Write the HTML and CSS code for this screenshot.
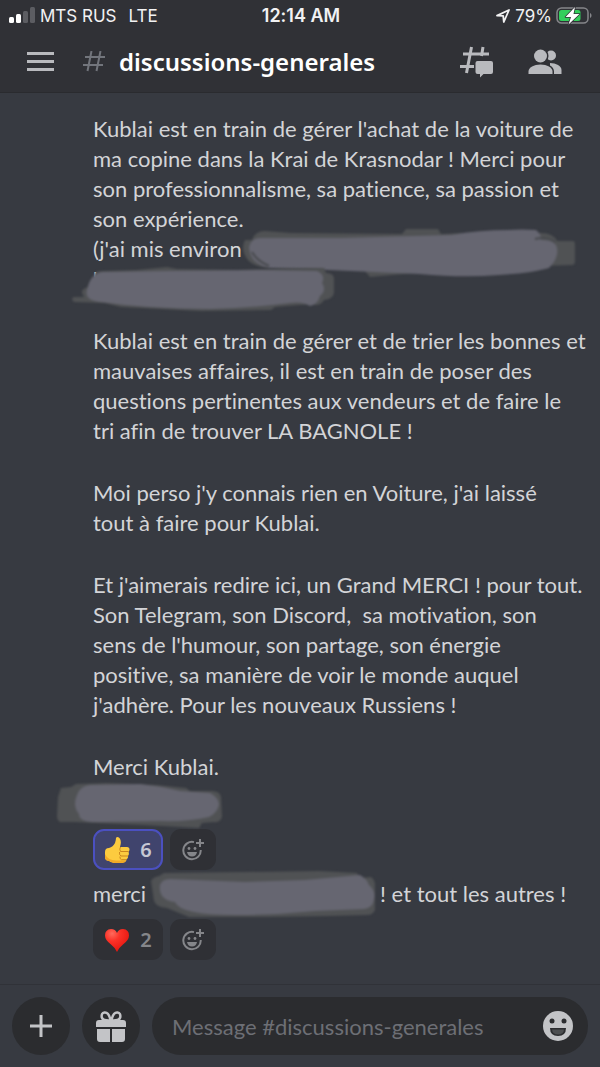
FILE: index.html
```html
<!DOCTYPE html>
<html lang="fr">
<head>
    <meta charset="UTF-8">
    <meta name="viewport" content="width=device-width, initial-scale=1.0">
    <title>discussions-generales</title>
    <link rel="stylesheet" href="styles.css">
</head>
<body>
    <header class="top">
        <div class="status">
            <div class="status-left">
                <svg class="signal" viewBox="0 0 26 17" aria-hidden="true">
                    <rect x="0" y="10" width="5" height="6" rx="1.5" fill="#fff"/>
                    <rect x="7" y="7" width="5" height="9" rx="1.5" fill="#fff"/>
                    <rect x="14" y="4" width="5" height="12" rx="1.5" fill="#5c5d62"/>
                    <rect x="21" y="0" width="5" height="16" rx="1.5" fill="#5c5d62"/>
                </svg>
                <span>MTS RUS</span>
                <span class="network">LTE</span>
            </div>
            <div class="clock">12:14 AM</div>
            <div class="status-right">
                <svg class="location" viewBox="0 0 16 16" aria-hidden="true">
                    <path d="M2 7.6 14 2 8.8 14 8.2 7.9Z" fill="none" stroke="#f2f2f3" stroke-width="1.8" stroke-linejoin="round"/>
                </svg>
                <span>79%</span>
                <svg class="battery" viewBox="0 0 37 18" aria-hidden="true">
                    <rect x="1" y="1" width="31" height="15" rx="4.5" fill="none" stroke="#85868a" stroke-width="1.5"/>
                    <rect x="3" y="3" width="21.5" height="11" rx="2.5" fill="#33cf5c"/>
                    <path d="M34 6c2 .7 2 4.300 0 5z" fill="#85868a"/>
                    <path d="M19 0 9.500 10h5.500L12.500 17.500 23.500 7h-6z" fill="#fff" stroke="#303136" stroke-width="1.5" stroke-linejoin="round" paint-order="stroke"/>
                </svg>
            </div>
        </div>
        <div class="channel">
            <button class="icon-btn" aria-label="Menu">
                <svg class="menu" viewBox="0 0 27 19"><path d="M0 1.500h27M0 9.500h27M0 17.500h27" stroke="#b9babe" stroke-width="3"/></svg>
            </button>
            <svg class="hash" viewBox="0 0 22 21" aria-hidden="true">
                <path d="M8.500 0 4.500 20M17.500 0l-4 20M2 6h20M0 14h20" fill="none" stroke="#72757c" stroke-width="2"/>
            </svg>
            <h1>discussions-generales</h1>
            <button class="icon-btn threads-btn" aria-label="Fils">
                <svg class="threads" viewBox="0 0 33 32">
                    <path d="M11.500 1 6.500 27M23 1l-1.500 9M3 8h26M0 20.500h14" fill="none" stroke="#b9babe" stroke-width="3"/>
                    <path d="M17.500 15H31q2 0 2 2v9q0 2-2 2h-7.500L20 31.500V28h-2.500q-2 0-2-2v-9q0-2 2-2z" fill="#b9babe" stroke="#303136" stroke-width="1" paint-order="stroke"/>
                </svg>
            </button>
            <button class="icon-btn members-btn" aria-label="Membres">
                <svg class="members" viewBox="0 0 34 26">
                    <circle cx="23" cy="6.500" r="5" fill="#b9babe"/>
                    <path d="M22 14c6 0 11.500 3 11.500 7v4H22z" fill="#b9babe"/>
                    <circle cx="12.500" cy="7" r="6.500" fill="#b9babe" stroke="#303136" stroke-width="3" paint-order="stroke"/>
                    <path d="M.5 25v-2.500C.5 18.500 6 15.500 12.500 15.500s12 3 12 7V25z" fill="#b9babe" stroke="#303136" stroke-width="3" paint-order="stroke"/>
                </svg>
            </button>
        </div>
    </header>

    <main class="chat">
        <div class="message">
            <p>
                Kublai est en train de gérer l'achat de la voiture de<br>
                ma copine dans la Krai de Krasnodar ! Merci pour<br>
                son professionnalisme, sa patience, sa passion et<br>
                son expérience.<br>
                (j'ai mis environ<br>
                '
                <svg class="scribble scribble-long" viewBox="240 225 340 55" aria-hidden="true">
                    <path class="smudge" d="M252 240q3-9 13-9l25 2 112 1 4-5h32l3 5 70-3 30 2q12 0 16 8h16q2 0 2 4v16q0 4-3 4l-32 1-60 6-50 2-4-2-56 5-5-6-90-3q-20 0-27-8-8-10-3-20z"/>
                    <path class="ink" d="M249 247q2-9 12-9h80l110-3q28-5 58-5 12-1 27 0 6 5 5 10 14-1 16 8 2 10-8 20-16 5-50 7-35 3-80-1l-90-4-60-2q-19-4-20-21z"/>
                    <path class="stroke-mark" d="M252 252q5 9 17 14M535 239q12-3 20 3"/>
                </svg>
                <svg class="scribble scribble-wide" viewBox="70 262 270 50" aria-hidden="true">
                    <path class="smudge" d="M92 290l2-15q1-4 8-4l35-1 30-3 10 2 60 1 70-2h17l2 5q7 0 8 5v15q-1 6-10 7-4 7-12 4l-37 3-4 3-70 1-80-4-16-4-31-1q-4-4 0-5h10q-6-8 5-10z"/>
                    <path class="ink" d="M87 290q3-16 15-18l68-1 90-1 57 1q9 4 5 12 5 7-2 13-2 8-10 10-8-5-20-3-40 5-80 6-60 0-110-7-16-2-13-12z"/>
                </svg>
            </p>
            <p>
                Kublai est en train de gérer et de trier les bonnes et<br>
                mauvaises affaires, il est en train de poser des<br>
                questions pertinentes aux vendeurs et de faire le<br>
                tri afin de trouver LA BAGNOLE !
            </p>
            <p>
                Moi perso j'y connais rien en Voiture, j'ai laissé<br>
                tout à faire pour Kublai.
            </p>
            <p>
                Et j'aimerais redire ici, un Grand MERCI ! pour tout.<br>
                Son Telegram, son Discord,&nbsp; sa motivation, son<br>
                sens de l'humour, son partage, son énergie<br>
                positive, sa manière de voir le monde auquel<br>
                j'adhère. Pour les nouveaux Russiens !
            </p>
            <p class="signature">
                Merci Kublai.
                <svg class="scribble scribble-name" viewBox="55 780 170 50" aria-hidden="true">
                    <path class="smudge" d="M58 797l3-9 10-1 5-3 30-1 50 2 30 3 4 3h22q8 0 9 6l1 20q-2 6-8 5l-12 1-3 5-55-3-70-3H60q-3-2-3-6z"/>
                    <path class="ink" d="M77 795q3-9 13-10l50-1q20 2 40 7l30 2q9 5 9 12-2 8-10 12-20 5-50 4l-60 1q-20 1-20-8-7-8-2-19z"/>
                </svg>
            </p>
            <div class="reactions">
                <button class="reaction mine">
                    <svg class="emoji" viewBox="0 0 26 26" aria-label="pouce">
                        <path d="M1 15q0-4 4-4 4-1 6-5 1-3 1-5Q13-1 15.500 1q2.500 3 .500 9h7q2.500 0 2.500 2.500 0 1.500-1 2.200 1 2.800-.500 4 .5 2.500-1.500 3.600 0 3-3.500 3H9q-3 0-4-1.600Q1 24 1 20z" fill="#fccb3f"/>
                        <path d="M1 17v4q1 3 4 3l4 2h10q2.500-.5 3-2.500H12q-8 0-11-6.500z" fill="#f1a927"/>
                        <path d="M16.500 10q-1.500 2 0 4.500h8M15.500 15q-.5 3 1.500 4h7M16 19.500q-.5 2.500 1.500 3.200h5" fill="none" stroke="#cb861c" stroke-width="1"/>
                    </svg>
                    <span>6</span>
                </button>
                <button class="reaction add" aria-label="Ajouter une réaction">
                    <svg class="add-emoji" viewBox="0 0 22 22">
                        <path d="M12 3.100A8.700 8.700 0 1 0 18.700 11" fill="none" stroke="#85868a" stroke-width="2"/>
                        <circle cx="7" cy="9.500" r="1.400" fill="#85868a"/><circle cx="13" cy="9.500" r="1.400" fill="#85868a"/>
                        <path d="M5 13h10q-1 4.500-5 4.500T5 13zM17 0h2v3h3v2h-3v3h-2V5h-3V3h3z" fill="#85868a"/>
                    </svg>
                </button>
            </div>
        </div>
        <div class="message">
            <p>merci<span class="hidden-names">
                <svg class="scribble scribble-names" viewBox="150 868 230 52" aria-hidden="true">
                    <path class="smudge" d="M151 881q2-4 8-5l5-3 80-1 75-1 38 2 3 5 11-1q4 3 4 8v25q-2 5-8 5l-38 1-60 1-80 0-22-9q-11-1-13-7z"/>
                    <path class="ink" d="M160 885q2-6 10-6l75 3 60-2 55-5q7 4 9 10 7 6 5 14-1 9-10 10l-49 2q-40 4-80 4-55 0-60-13-17-2-15-17z"/>
                </svg></span>! et tout les autres !</p>
            <div class="reactions">
                <button class="reaction">
                    <svg class="emoji" viewBox="0 0 26 26" aria-label="coeur">
                        <defs>
                            <radialGradient id="red" cx=".3" cy=".2" r=".8">
                                <stop offset="0" stop-color="#ff6a5c"/>
                                <stop offset=".4" stop-color="#fb3228"/>
                                <stop offset="1" stop-color="#e5160f"/>
                            </radialGradient>
                        </defs>
                        <path d="M13 25Q11.500 21 7 17.500 1 13 1 8.500 1 2.500 7 2q4.500 0 6 4 1.500-4 6-4 6 .5 6 6.500 0 4.500-6 9Q14.500 21 13 25z" fill="url(#red)"/>
                    </svg>
                    <span>2</span>
                </button>
                <button class="reaction add" aria-label="Ajouter une réaction">
                    <svg class="add-emoji" viewBox="0 0 22 22">
                        <path d="M12 3.100A8.700 8.700 0 1 0 18.700 11" fill="none" stroke="#85868a" stroke-width="2"/>
                        <circle cx="7" cy="9.500" r="1.400" fill="#85868a"/><circle cx="13" cy="9.500" r="1.400" fill="#85868a"/>
                        <path d="M5 13h10q-1 4.500-5 4.500T5 13zM17 0h2v3h3v2h-3v3h-2V5h-3V3h3z" fill="#85868a"/>
                    </svg>
                </button>
            </div>
        </div>
    </main>

    <form class="composer">
        <button type="button" class="round-btn" aria-label="Ajouter">
            <svg class="plus" viewBox="0 0 22 22"><path d="M11 0v22M0 11h22" stroke="#c3c4c7" stroke-width="3"/></svg>
        </button>
        <button type="button" class="round-btn" aria-label="Cadeau">
            <svg class="gift" viewBox="0 0 30 31">
                <path d="M14.500 9.500Q7 10 5.800 6.500 5 2 8.500 1.500q4.500-.5 6 8zM15.500 9.500Q23 10 24.200 6.500 25 2 21.500 1.500q-4.500-.5-6 8z" fill="none" stroke="#c3c4c7" stroke-width="2.500"/>
                <path d="M3 9h24q3 0 3 3v4H0v-4q0-3 3-3zM1 18h13v13H4q-3 0-3-3zM16 18h13v10q0 3-3 3H16z" fill="#c3c4c7"/>
            </svg>
        </button>
        <div class="field">
            <input type="text" placeholder="Message #discussions-generales" aria-label="Message">
            <button type="button" class="icon-btn" aria-label="Emoji">
                <svg class="smiley" viewBox="0 0 30 30">
                    <circle cx="15" cy="15" r="15" fill="#c3c4c7"/>
                    <circle cx="9" cy="10" r="2.500" fill="#2b2c2f"/><circle cx="21" cy="10" r="2.500" fill="#2b2c2f"/>
                    <path d="M7 17h16q0 8-8 8t-8-8z" fill="#2b2c2f"/>
                    <path d="M9 18.500h12q-.5 5-6 5t-6-5z" fill="#b5b6b9" opacity=".25"/>
                </svg>
            </button>
        </div>
    </form>
</body>
</html>
```
FILE: styles.css
```css
* {
    box-sizing: border-box;
}

body {
    margin: 0;
    min-height: 100vh;
    display: flex;
    flex-direction: column;
    background-color: #373a41;
    color: #d3d4d7;
    font-family: Lato, "Noto Sans", sans-serif;
    font-variant-ligatures: none;
}

svg {
    display: block;
    flex: none;
}

button {
    border: none;
    padding: 0;
    background: none;
    color: inherit;
    font-family: inherit;
}

/* header */
.top {
    height: 93px;
    background-color: #303136;
    border-bottom: 1px solid #2a2b2f;
}

.status {
    display: grid;
    grid-template-columns: 1fr auto 1fr;
    align-items: center;
    height: 31px;
    padding: 0 7px 0 9px;
    color: #f2f2f3;
    font-family: Inter, Roboto, sans-serif;
    font-size: 17px;
}

.status-left,
.status-right {
    display: flex;
    align-items: center;
}

.status-right {
    justify-content: flex-end;
    gap: 4px;
}

.signal {
    width: 26px;
    height: 17px;
    margin-right: 5px;
}

.network {
    margin-left: 12px;
}

.clock {
    font-weight: 600;
    font-size: 18px;
}

.location {
    width: 16px;
    height: 16px;
}

.battery {
    width: 37px;
    height: 18px;
}

.channel {
    display: flex;
    align-items: center;
    height: 61px;
    padding: 0 38px 0 27px;
}

.menu {
    width: 27px;
    height: 19px;
}

.hash {
    width: 22px;
    height: 21px;
    margin: 0 14px 0 29px;
}

.channel h1 {
    flex: 1;
    margin: 0;
    color: #fff;
    font-family: "Noto Sans", sans-serif;
    font-size: 24px;
    font-weight: 600;
    line-height: 32px;
}

.threads {
    width: 33px;
    height: 32px;
}

.members {
    width: 34px;
    height: 26px;
}

.members-btn {
    margin-left: 35px;
}

/* messages */
.chat {
    flex: 1;
    padding: 21px 16px 24px 93px;
}

.message p {
    position: relative;
    margin: 0 0 32px;
    font-size: 22px;
    line-height: 30px;
    white-space: nowrap;
}

.message p.signature {
    height: 60px;
    margin-bottom: 17px;
}

.message + .message p {
    margin: 9px 0 10px;
}

.hidden-names {
    display: inline-block;
    width: 234px;
}

/* painted over private details */
.scribble {
    position: absolute;
    filter: blur(1px);
}

.smudge {
    fill: #505254;
}

.ink {
    fill: #666671;
}

.stroke-mark {
    fill: none;
    stroke: #484a4e;
    stroke-width: 2;
}

.scribble-long {
    left: 147px;
    top: 111px;
    width: 340px;
    height: 55px;
}

.scribble-wide {
    left: -23px;
    top: 148px;
    width: 270px;
    height: 50px;
}

.scribble-name {
    left: -38px;
    top: 28px;
    width: 170px;
    height: 50px;
}

.scribble-names {
    left: 57px;
    top: -11px;
    width: 230px;
    height: 52px;
}

.reactions {
    display: flex;
    gap: 7px;
}

.reaction {
    display: flex;
    align-items: center;
    justify-content: center;
    gap: 10px;
    width: 70px;
    height: 41px;
    border-radius: 11px;
    background-color: #2f3035;
    color: #85868a;
    font-family: "Noto Sans", sans-serif;
    font-size: 20px;
    font-weight: 600;
}

.reaction.mine {
    border: 2px solid #4b50c0;
    background-color: #40446d;
    color: #c6c8d4;
}

.reaction.add {
    width: 46px;
}

.emoji {
    width: 26px;
    height: 26px;
}

.add-emoji {
    width: 22px;
    height: 22px;
}

/* bottom bar */
.composer {
    display: flex;
    align-items: center;
    gap: 12px;
    padding: 12px;
    border-top: 1px solid #303238;
    border-bottom: 1px solid #302c38;
}

.round-btn {
    display: flex;
    align-items: center;
    justify-content: center;
    flex: none;
    width: 58px;
    height: 58px;
    border-radius: 50%;
    background-color: #2b2c2f;
}

.plus {
    width: 22px;
    height: 22px;
}

.gift {
    width: 30px;
    height: 31px;
}

.field {
    display: flex;
    align-items: center;
    flex: 1;
    height: 58px;
    padding: 0 15px 0 20px;
    border-radius: 30px;
    background-color: #2b2c2f;
}

.field input {
    flex: 1;
    min-width: 0;
    padding: 0;
    border: none;
    outline: none;
    background: none;
    color: #d3d4d7;
    font-family: inherit;
    font-size: 22px;
}

.field input::placeholder {
    color: #6d6f75;
    opacity: 1;
}

.smiley {
    width: 30px;
    height: 30px;
}
```
